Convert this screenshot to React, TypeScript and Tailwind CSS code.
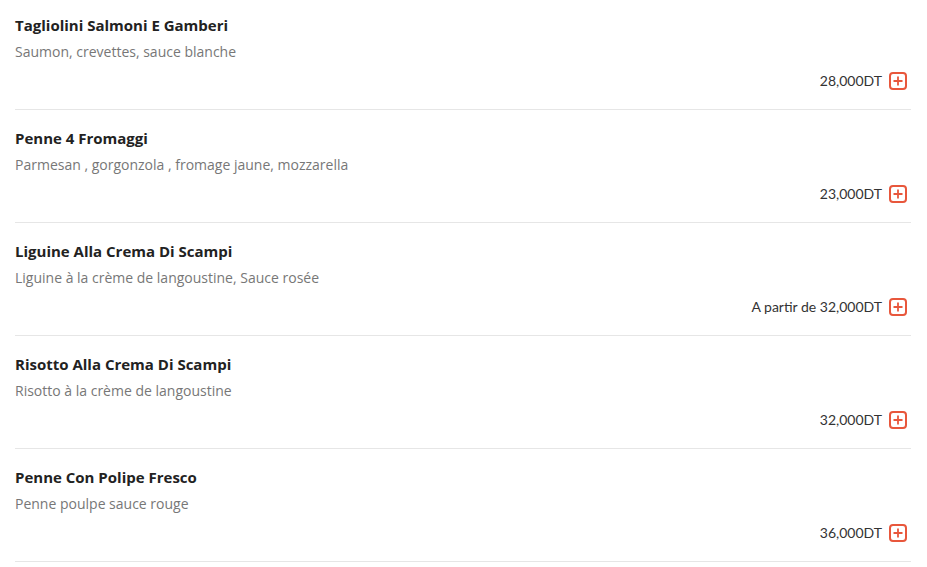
import React from 'react';

interface Dish {
  name: string;
  description: string;
  price: string;
}

const dishes: Dish[] = [
  { name: 'Tagliolini Salmoni E Gamberi', description: 'Saumon, crevettes, sauce blanche', price: '28,000DT' },
  { name: 'Penne 4 Fromaggi', description: 'Parmesan , gorgonzola , fromage jaune, mozzarella', price: '23,000DT' },
  { name: 'Liguine Alla Crema Di Scampi', description: 'Liguine à la crème de langoustine, Sauce rosée', price: 'A partir de 32,000DT' },
  { name: 'Risotto Alla Crema Di Scampi', description: 'Risotto à la crème de langoustine', price: '32,000DT' },
  { name: 'Penne Con Polipe Fresco', description: 'Penne poulpe sauce rouge', price: '36,000DT' },
];

const AddIcon = () => (
  <svg width="18" height="18" viewBox="0 0 18 18" fill="none">
    <rect x="1" y="1" width="16" height="16" rx="3" stroke="#e8573c" strokeWidth="2" />
    <path d="M9 4.5v9M4.5 9h9" stroke="#e8573c" strokeWidth="1.8" />
  </svg>
);

const App: React.FC = () => {
  return (
    <div className="min-h-screen bg-white pl-[15px]" style={{ fontFamily: '"Open Sans", Lato, sans-serif' }}>
      <div className="w-[896px]">
        {dishes.map((dish, i) => (
          <div
            key={dish.name}
            className={`border-b border-[#e6e6e6] pb-[18px] ${i === 0 ? 'pt-[15px]' : 'pt-[18px]'}`}
          >
            <div className="text-[15px] font-bold leading-5 text-[#222222]">{dish.name}</div>
            <div className="mt-[7px] text-[14px] leading-5 text-[#777777]">{dish.description}</div>
            <div className="mt-[9px] flex items-center justify-end gap-[7px] pr-[4px]">
              <span className="text-[14px] leading-5 text-[#333333]" style={{ fontFamily: 'Lato, sans-serif' }}>{dish.price}</span>
              <AddIcon />
            </div>
          </div>
        ))}
      </div>
    </div>
  );
};

export default App;
